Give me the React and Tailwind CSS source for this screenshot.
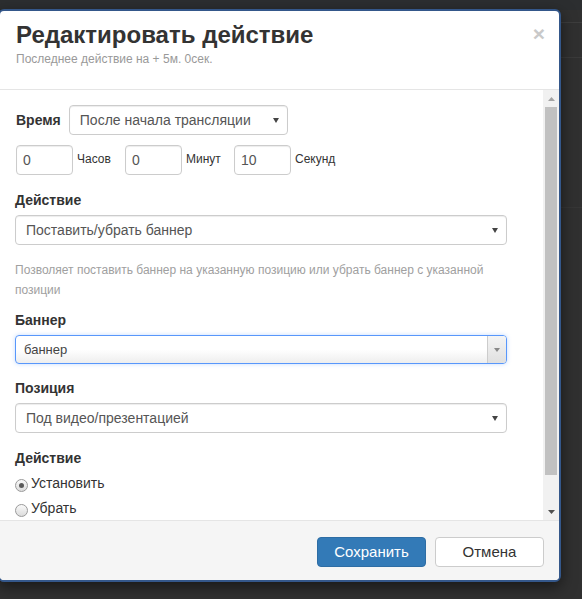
import React from "react";

function Tri({ color = "#555", w = 7, h = 5, up = false }) {
  return (
    <svg width={w} height={h} viewBox={`0 0 ${w} ${h}`} className="block">
      <path d={up ? `M0 ${h}H${w}L${w / 2} 0Z` : `M0 0H${w}L${w / 2} ${h}Z`} fill={color} />
    </svg>
  );
}

function Select({ text, className = "" }) {
  return (
    <div
      className={`h-[30px] flex items-center justify-between border border-[#ccc] rounded-[4px] bg-white pl-[10px] pr-[8px] shadow-[inset_0_1px_1px_rgba(0,0,0,0.075)] ${className}`}
    >
      <span className="text-[14px] text-[#555] leading-[20px]">{text}</span>
      <Tri color="#444" w={6} h={5} />
    </div>
  );
}

function NumInput({ value, label }) {
  return (
    <div className="w-[109px] flex items-start">
      <div className="w-[57px] h-[30px] border border-[#ccc] rounded-[4px] bg-white pl-[6px] flex items-center shadow-[inset_0_1px_1px_rgba(0,0,0,0.075)]">
        <span className="text-[14px] text-[#555] leading-[20px]">{value}</span>
      </div>
      <span className="ml-[4px] pt-[5px] text-[12px] leading-[18px] text-[#333]">{label}</span>
    </div>
  );
}

function Label({ children, className = "" }) {
  return (
    <div className={`text-[14px] font-bold leading-[20px] text-[#333] ${className}`}>{children}</div>
  );
}

function Radio({ checked, label, className = "" }) {
  return (
    <div className={`flex items-start ${className}`}>
      <div className="mt-[6px] w-[13px] h-[13px] rounded-full border border-[#9a9a9a] bg-linear-to-b from-[#fafafa] to-[#dcdcdc] flex items-center justify-center shrink-0">
        {checked && <div className="w-[5px] h-[5px] rounded-full bg-[#5a5a5a]" />}
      </div>
      <span className="ml-[3px] text-[14px] leading-[20px] text-[#333]">{label}</span>
    </div>
  );
}

export default function App() {
  return (
    <div className="relative w-[582px] h-[599px] overflow-hidden bg-[#303030] font-['Liberation_Sans',Arial,sans-serif]">
      {/* page behind the dialog */}
      <div className="h-[10px] bg-[#2c2e30]" />
      <div className="h-[12px]" />
      <div className="h-[35px] border-t border-[#3d3d3d]" />
      <div className="h-[150px] border-t border-[#3a3a3a]" />
      <div className="border-t border-[#363636]" />

      {/* dialog */}
      <div className="absolute left-[-2px] top-[9px] w-[563px] h-[573px] border-2 border-[#34578a] rounded-[6px] bg-white flex flex-col overflow-hidden shadow-[0_5px_15px_rgba(0,0,0,0.5)]">
        {/* header */}
        <div className="relative shrink-0 h-[79px] border-b border-[#e5e5e5] pl-[16px] pr-[15px] pt-[11px]">
          <div className="text-[24px] font-bold leading-[26px] text-[#333]">Редактировать действие</div>
          <div className="mt-[2px] text-[12px] leading-[18px] text-[#999]">Последнее действие на + 5м. 0сек.</div>
          <div className="absolute right-[14px] top-[12px] text-[21px] font-bold leading-[21px] text-[#c9c9c9]">×</div>
        </div>

        {/* body */}
        <div className="shrink-0 h-[430px] flex">
          <div className="flex-1 overflow-hidden pl-[15px] pt-[15px]">
            <div className="flex items-center h-[30px]">
              <Label className="mr-[8px] pl-[1px]">Время</Label>
              <Select text="После начала трансляции" className="w-[219px]" />
            </div>
            <div className="flex mt-[10px] pl-[1px]">
              <NumInput value="0" label="Часов" />
              <NumInput value="0" label="Минут" />
              <NumInput value="10" label="Секунд" />
            </div>

            <Label className="mt-[15px]">Действие</Label>
            <Select text="Поставить/убрать баннер" className="w-[492px] mt-[5px]" />

            <div className="mt-[15px] w-[492px] text-[12px] leading-[20px] text-[#a0a0a0]">
              Позволяет поставить баннер на указанную позицию или убрать баннер с указанной позиции
            </div>

            <Label className="mt-[10px]">Баннер</Label>
            <div className="mt-[5px] w-[492px] h-[29px] flex border border-[#5897fb] rounded-[4px] overflow-hidden bg-linear-to-b from-white from-50% to-[#eeeeee] shadow-[0_0_4px_rgba(88,151,251,0.35)]">
              <div className="flex-1 flex items-center pl-[8px] text-[13px] text-[#444]">баннер</div>
              <div className="w-[19px] border-l border-[#ccc] bg-linear-to-b from-[#f4f4f4] to-[#e0e0e0] flex items-center justify-center">
                <Tri color="#888" w={6} h={4} />
              </div>
            </div>

            <Label className="mt-[14px]">Позиция</Label>
            <Select text="Под видео/презентацией" className="w-[492px] mt-[5px]" />

            <Label className="mt-[15px]">Действие</Label>
            <Radio checked label="Установить" className="mt-[5px]" />
            <Radio label="Убрать" className="mt-[5px]" />
          </div>

          {/* scrollbar */}
          <div className="w-[16px] bg-[#f1f1f1] flex flex-col">
            <div className="h-[17px] flex items-center justify-center">
              <Tri color="#a3a3a3" w={7} h={4} up />
            </div>
            <div className="mx-[2px] h-[368px] bg-[#c1c1c1]" />
            <div className="flex-1" />
            <div className="h-[17px] flex items-center justify-center">
              <Tri color="#505050" w={7} h={4} />
            </div>
          </div>
        </div>

        {/* footer */}
        <div className="flex-1 border-t border-[#e5e5e5] bg-[#f5f5f5] flex justify-end items-start pt-[16px] pr-[15px] gap-[9px]">
          <div className="w-[109px] h-[30px] rounded-[4px] bg-[#337ab7] border border-[#2e6da4] flex items-center justify-center text-[15px] text-white">
            Сохранить
          </div>
          <div className="w-[109px] h-[30px] rounded-[4px] bg-white border border-[#ccc] flex items-center justify-center text-[15px] text-[#333]">
            Отмена
          </div>
        </div>
      </div>
    </div>
  );
}
